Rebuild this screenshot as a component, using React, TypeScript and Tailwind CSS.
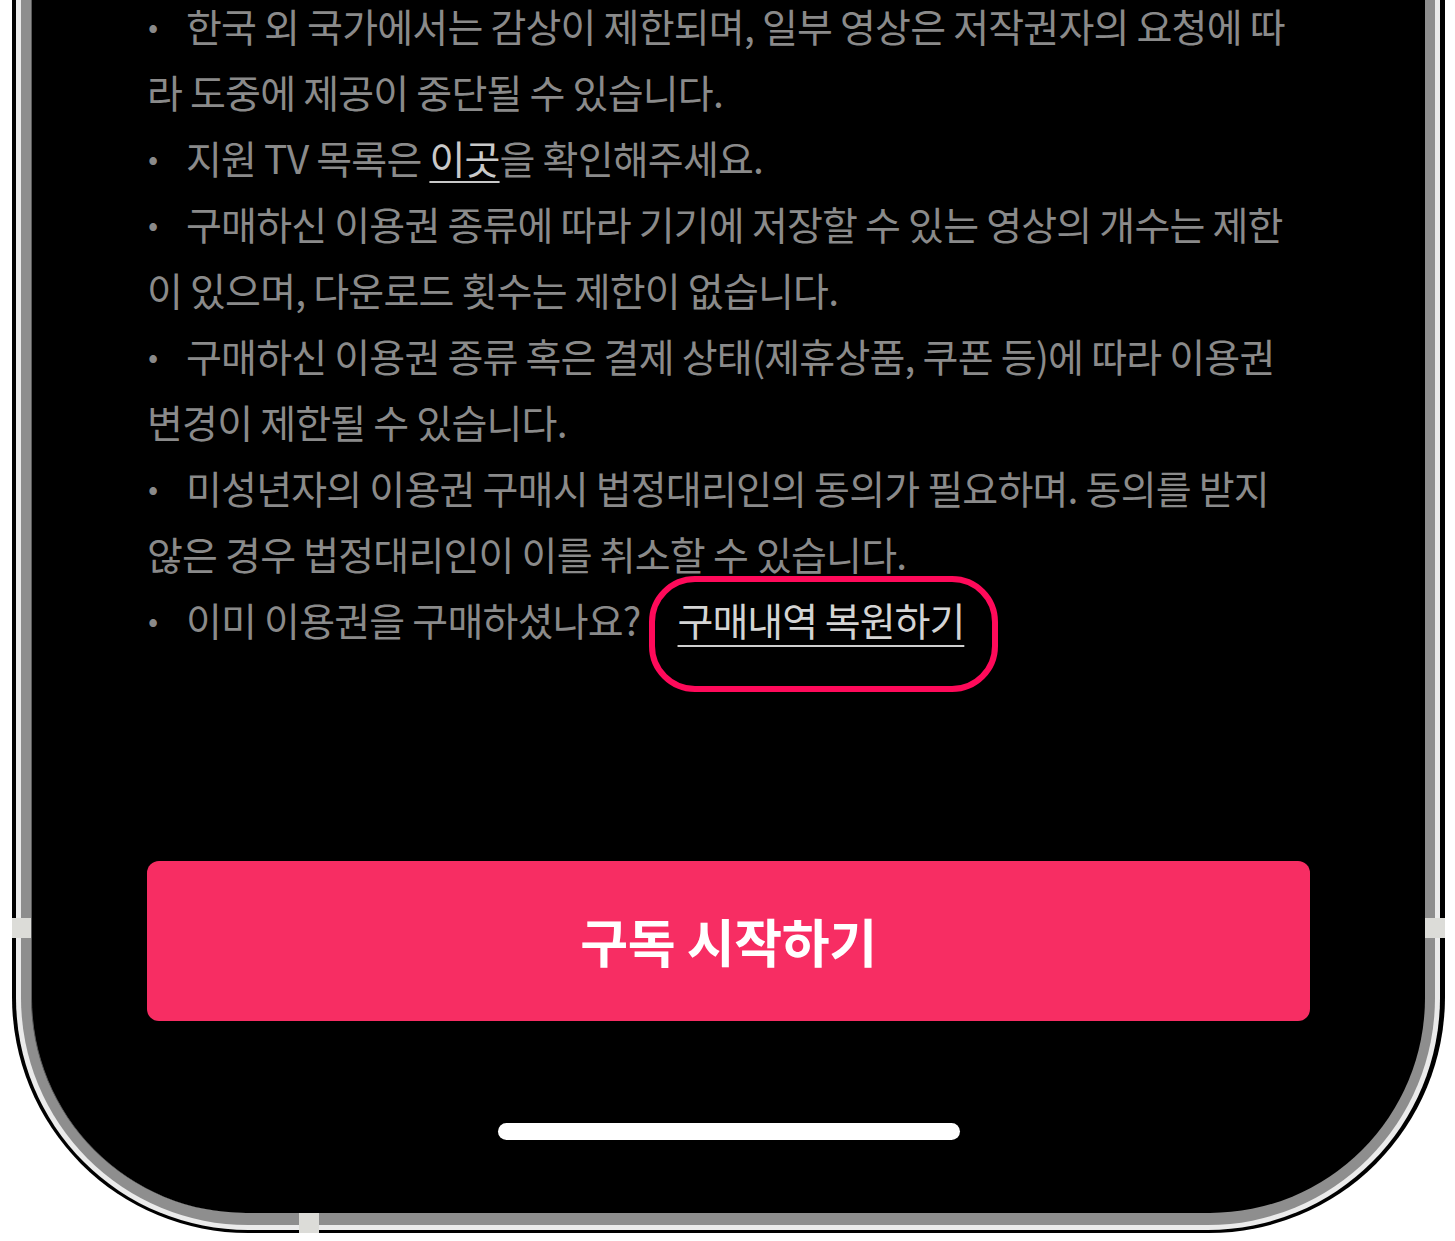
import React from "react";

const Bullet = () => (
  <span className="inline-block w-[39px] pl-[1px] text-[30px] align-top">•</span>
);

export default function App() {
  const lineCls = "h-[66px] whitespace-nowrap";
  return (
    <div className="relative w-[1455px] h-[1241px] bg-white overflow-hidden">
      {/* phone frame */}
      <div className="ml-[12px] w-[1433px] bg-black pl-[4px] pr-[5px] pb-[3px] rounded-b-[236px]">
        <div className="bg-[#ebebeb] px-[5px] pb-[5px] rounded-b-[232px]">
          <div className="bg-[#8e8e8e] pl-[10px] pr-[10px] pb-[12px] rounded-b-[227px]">
            <div className="border-l border-[#5a5a5a] bg-black h-[1213px] rounded-b-[215px] overflow-hidden flex flex-col">
              <div
                className="mt-[-8px] pl-[115px] text-[#8a8a8a] text-[39px] leading-[66px] tracking-[-0.8px]"
                style={{ fontFamily: '"Noto Sans CJK KR", "Noto Sans", sans-serif' }}
              >
                <div className={lineCls}>
                  <Bullet />한국 외 국가에서는 감상이 제한되며, 일부 영상은 저작권자의 요청에 따
                </div>
                <div className={lineCls}>라 도중에 제공이 중단될 수 있습니다.</div>
                <div className={lineCls}>
                  <Bullet />지원 TV 목록은 <span className="text-[#c9c9c9] underline underline-offset-[7px] decoration-[2px]">이곳</span>을 확인해주세요.
                </div>
                <div className={lineCls}>
                  <Bullet />구매하신 이용권 종류에 따라 기기에 저장할 수 있는 영상의 개수는 제한
                </div>
                <div className={lineCls}>이 있으며, 다운로드 횟수는 제한이 없습니다.</div>
                <div className={lineCls}>
                  <Bullet />구매하신 이용권 종류 혹은 결제 상태(제휴상품, 쿠폰 등)에 따라 이용권
                </div>
                <div className={lineCls}>변경이 제한될 수 있습니다.</div>
                <div className={lineCls}>
                  <Bullet />미성년자의 이용권 구매시 법정대리인의 동의가 필요하며. 동의를 받지
                </div>
                <div className={lineCls}>않은 경우 법정대리인이 이를 취소할 수 있습니다.</div>
                <div className={`${lineCls} relative`}>
                  <Bullet />이미 이용권을 구매하셨나요?
                  <span className="relative ml-[37px] text-[#d4d4d4] tracking-[-1px] underline underline-offset-[9px] decoration-[2px] decoration-[#cfcfcf]">
                    구매내역 복원하기
                    <span className="absolute left-[-29px] top-[-15px] w-[349px] h-[116px] border-[6px] border-[#ff0a5a] rounded-[46px]"></span>
                  </span>
                </div>
              </div>
              <div className="mt-[209px] ml-[115px] w-[1163px] h-[160px] bg-[#f72d63] rounded-[12px] flex items-center justify-center">
                <span
                  className="text-white text-[52px] font-bold tracking-[-0.3px]"
                  style={{ fontFamily: '"Noto Sans CJK KR", "Noto Sans", sans-serif' }}
                >
                  구독 시작하기
                </span>
              </div>
              <div className="mt-[102px] ml-[466px] w-[462px] h-[17px] rounded-full bg-white"></div>
            </div>
          </div>
        </div>
      </div>
      {/* antenna bands */}
      <div className="absolute left-[12px] top-[918px] w-[19px] h-[20px] bg-[#dcdcd8]"></div>
      <div className="absolute left-[1425px] top-[918px] w-[20px] h-[20px] bg-[#dcdcd8]"></div>
      <div className="absolute left-[299px] top-[1213px] w-[20px] h-[20px] bg-[#dcdcd8]"></div>
    </div>
  );
}
